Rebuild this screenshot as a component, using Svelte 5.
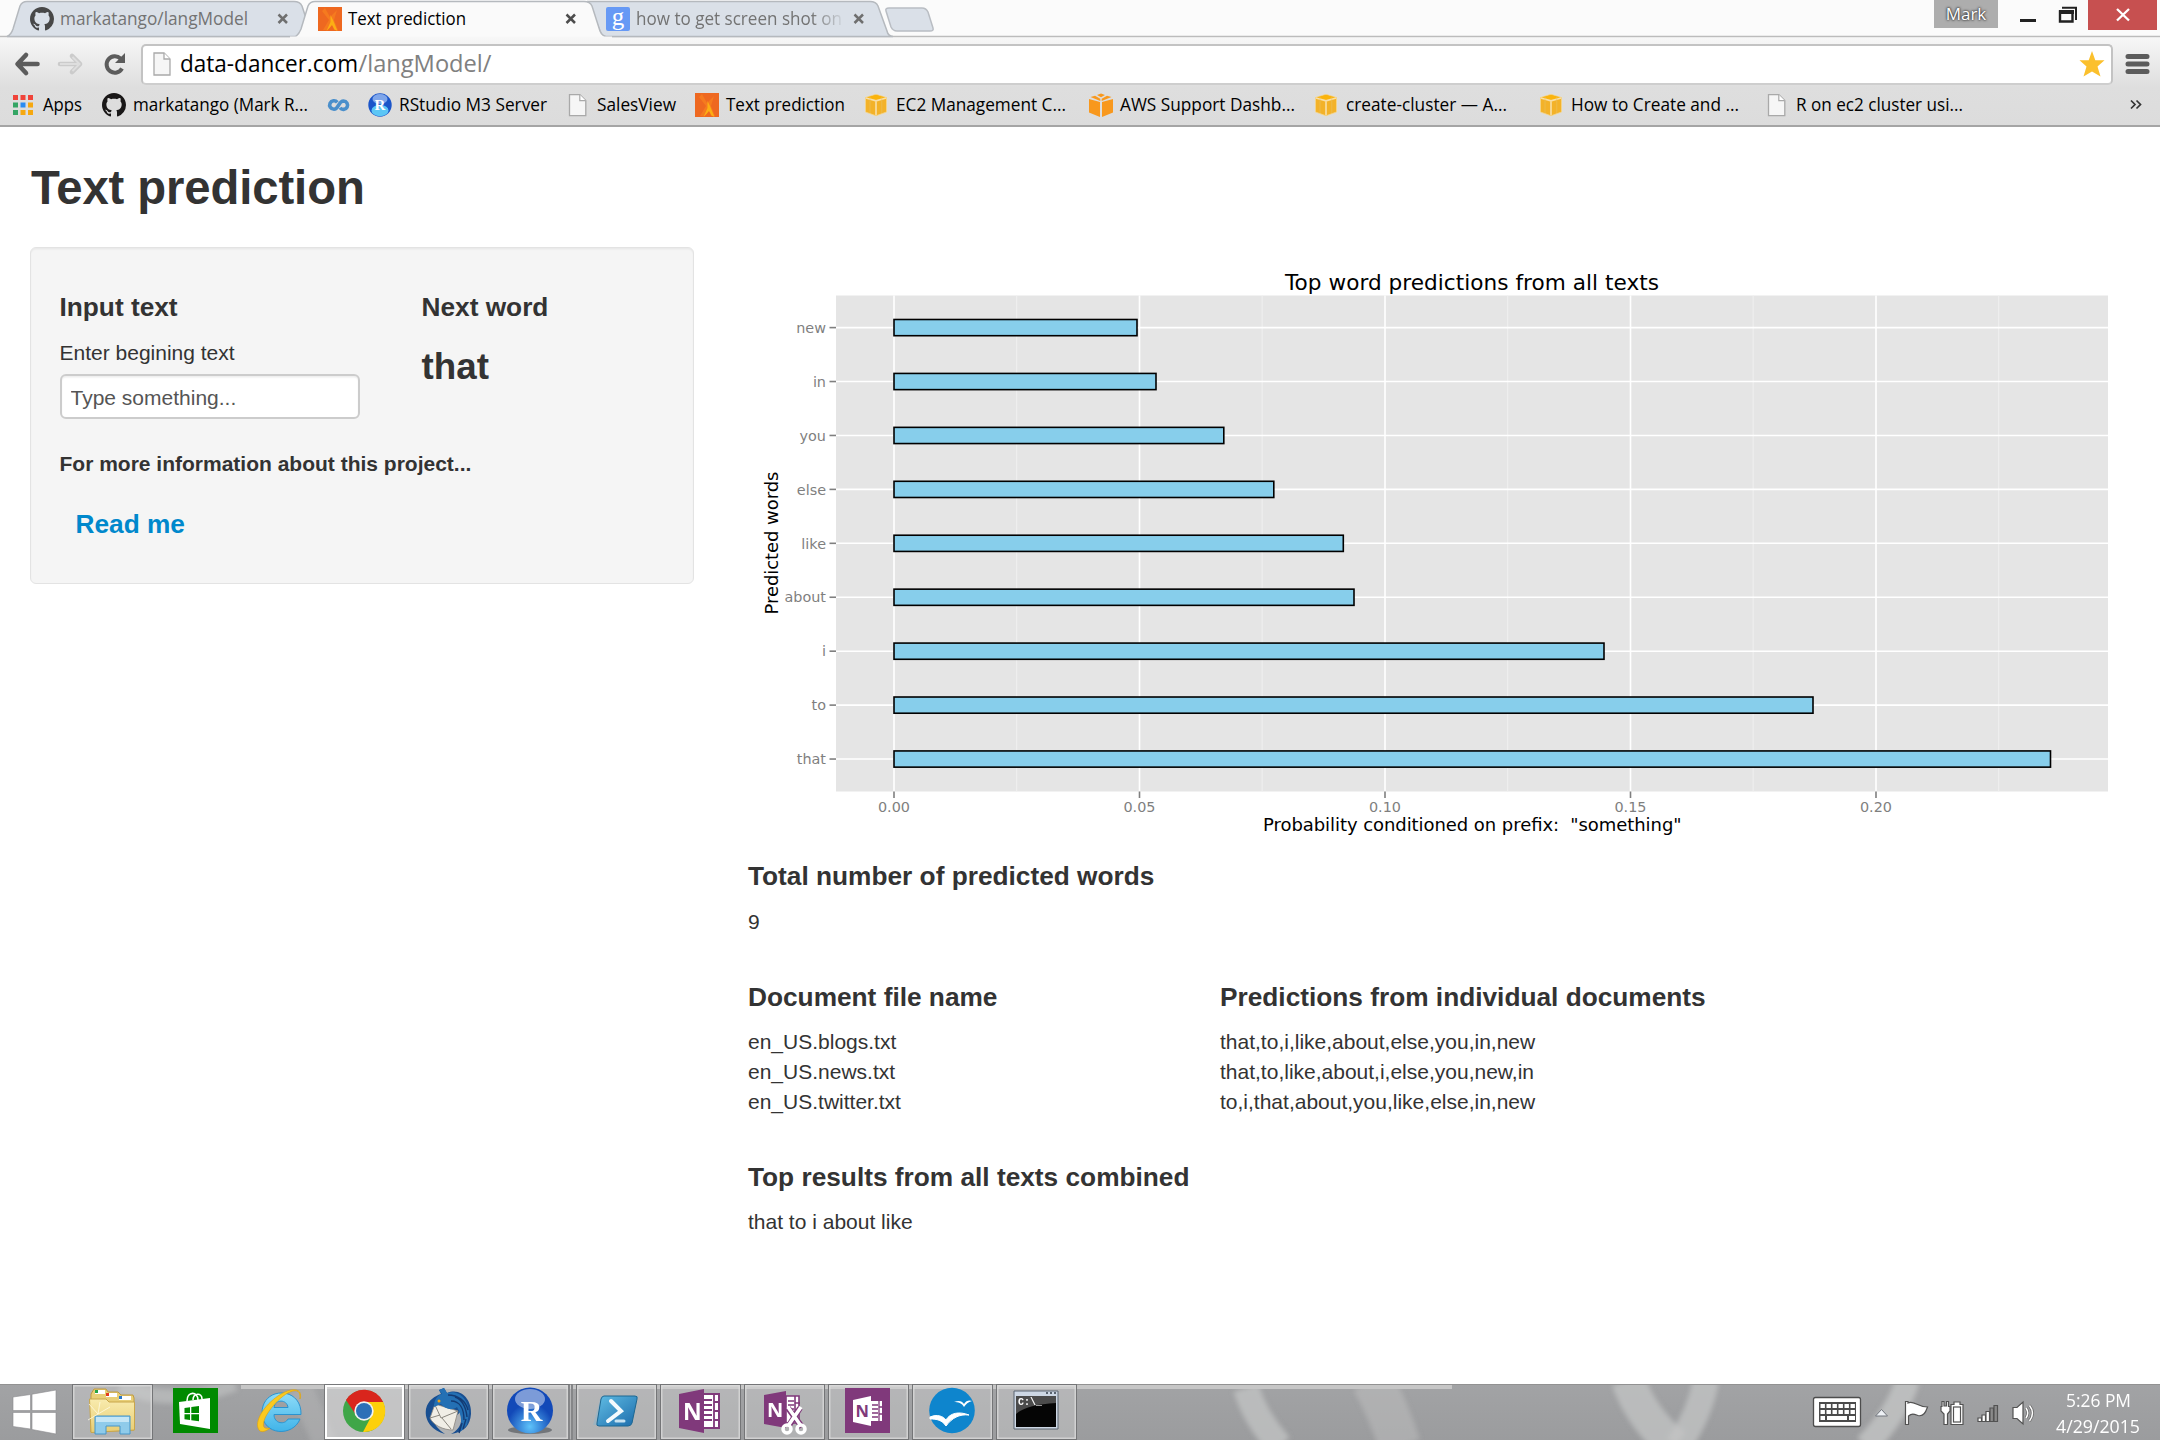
<script>
  const bookmarks = [
    { icon: 'apps', text: 'Apps', w: 39, span: 90 },
    { icon: 'github', text: 'markatango (Mark R...', w: 175, span: 225 },
    { icon: 'coursera', text: '', w: 0, span: 41 },
    { icon: 'rstudio', text: 'RStudio M3 Server', w: 148, span: 198 },
    { icon: 'page', text: 'SalesView', w: 79, span: 129 },
    { icon: 'flame', text: 'Text prediction', w: 119, span: 170 },
    { icon: 'cube', text: 'EC2 Management C...', w: 170, span: 224 },
    { icon: 'aws', text: 'AWS Support Dashb...', w: 175, span: 226 },
    { icon: 'cube', text: 'create-cluster — A...', w: 161, span: 225 },
    { icon: 'cube', text: 'How to Create and ...', w: 168, span: 225 },
    { icon: 'page', text: 'R on ec2 cluster usi...', w: 167, span: 220 }
  ];

  const bars = [
    { word: 'new', end: 1137 },
    { word: 'in', end: 1156 },
    { word: 'you', end: 1223.8 },
    { word: 'else', end: 1273.8 },
    { word: 'like', end: 1343.3 },
    { word: 'about', end: 1354 },
    { word: 'i', end: 1604 },
    { word: 'to', end: 1813 },
    { word: 'that', end: 2050.5 }
  ];
  const rowY = (i) => 327.6 + i * 53.93;
  const ticks = ['0.00', '0.05', '0.10', '0.15', '0.20'];
  const tickX = (i) => 894 + i * 245.5;

  const documents = ['en_US.blogs.txt', 'en_US.news.txt', 'en_US.twitter.txt'];
  const predictions = [
    'that,to,i,like,about,else,you,in,new',
    'that,to,like,about,i,else,you,new,in',
    'to,i,that,about,you,like,else,in,new'
  ];

  const tasks = [
    { icon: 'explorer', state: 'open' },
    { icon: 'store', state: '' },
    { icon: 'ie', state: '' },
    { icon: 'chrome', state: 'active' },
    { icon: 'thunderbird', state: 'open' },
    { icon: 'rstudio', state: 'open stacked' },
    { icon: 'powershell', state: 'open' },
    { icon: 'onenote', state: 'open' },
    { icon: 'clipper', state: 'open' },
    { icon: 'onenoteapp', state: 'open' },
    { icon: 'openoffice', state: 'open' },
    { icon: 'cmd', state: 'open' }
  ];
  let phrase = $state('');
</script>

{#snippet label(text, w, size = 18, cls = '')}
  <svg class="label {cls}" width={w + 2} height="28" viewBox="0 0 {w + 2} 28">
    <text x="0" y="20" font-size={size} textLength={w} lengthAdjust="spacingAndGlyphs">{text}</text>
  </svg>
{/snippet}

{#snippet github(color)}
  <svg class="fav" viewBox="0 0 16 16"><path fill={color} d="M8 0C3.58 0 0 3.58 0 8c0 3.54 2.29 6.53 5.47 7.59.4.07.55-.17.55-.38 0-.19-.01-.82-.01-1.49-2.01.37-2.53-.49-2.69-.94-.09-.23-.48-.94-.82-1.13-.28-.15-.68-.52-.01-.53.63-.01 1.08.58 1.23.82.72 1.21 1.87.87 2.33.66.07-.52.28-.87.51-1.07-1.78-.2-3.64-.89-3.64-3.95 0-.87.31-1.59.82-2.15-.08-.2-.36-1.02.08-2.12 0 0 .67-.21 2.2.82.64-.18 1.32-.27 2-.27.68 0 1.36.09 2 .27 1.53-1.04 2.2-.82 2.2-.82.44 1.1.16 1.92.08 2.12.51.56.82 1.27.82 2.15 0 3.07-1.87 3.75-3.65 3.95.29.25.54.73.54 1.48 0 1.07-.01 1.93-.01 2.2 0 .21.15.46.55.38A8.013 8.013 0 0016 8c0-4.42-3.58-8-8-8z" /></svg>
{/snippet}

{#snippet flame()}
  <svg class="fav" viewBox="0 0 24 24">
    <rect width="24" height="24" fill="#ee6820" />
    <path d="M7 1 12 10 19 3 16 13 20 23H16L14 17 9 23H5L11 13 4 4Z" fill="#f57a1f" />
    <path d="M12.500 8 15 13 19.500 24 16.500 22.500 14 18 11.500 21 8.500 24 12.500 15Z" fill="#fcae14" />
  </svg>
{/snippet}

{#snippet page()}
  <svg class="fav" viewBox="0 0 24 24">
    <path d="M3.700 1.200H14l6 6V22.300H3.700Z" transform="translate(-.2 .4)" fill="#f6f6f6" stroke="#a9a9a9" stroke-width="1.300" />
    <path d="M13.800 1.800V7.600H19.600" fill="#fff" stroke="#a9a9a9" stroke-width="1.200" />
  </svg>
{/snippet}

{#snippet close(color)}
  <svg class="x" width="12" height="12" viewBox="0 0 12 12"><path d="M1.500 1.500 10 10M10 1.500 1.500 10" stroke={color} stroke-width="2.500" /></svg>
{/snippet}

{#snippet bookmarkIcon(name)}
  {#if name === 'apps'}
    <svg class="fav" viewBox="0 0 24 24">
      <path d="M1 2h5v5H1zM8.500 2h5v5h-5zM16 2h5v5h-5z" fill="#f0443a" />
      <path d="M1 9.500h5v5H1zM1 17h5v5H1z" fill="#34a564" />
      <path d="M8.500 9.500h5v5h-5z" fill="#2a8bf2" />
      <path d="M16 9.500h5v5h-5zM8.500 17h5v5h-5zM16 17h5v5h-5z" fill="#f6a80f" />
    </svg>
  {:else if name === 'github'}
    {@render github('#191717')}
  {:else if name === 'coursera'}
    <svg class="fav" viewBox="0 0 24 24">
      <g fill="none" stroke="#4a8fcb" stroke-width="3.600">
        <path d="M10.300 9.300A4.300 4.300 0 1 0 7 16.300C11.500 16.300 11.500 8 16.500 8A4.200 4.200 0 1 1 13 14.700" />
      </g>
    </svg>
  {:else if name === 'rstudio'}
    <svg class="fav" viewBox="0 0 24 24">
      <circle cx="12" cy="12" r="11.700" fill="#1b55c9" />
      <ellipse cx="12" cy="17.500" rx="8.500" ry="5.700" fill="#5cc6f5" />
      <ellipse cx="12" cy="6" rx="7.500" ry="5" fill="#7fa6ea" />
      <text x="12" y="17" text-anchor="middle" class="serif" font-size="15" fill="#fff">R</text>
    </svg>
  {:else if name === 'page'}
    {@render page()}
  {:else if name === 'flame'}
    {@render flame()}
  {:else if name === 'cube'}
    <svg class="fav" viewBox="0 0 24 24">
      <path d="M.5 4.500V19L11 22.800 21.500 19V4.500L11 1.300Z" fill="#f3b229" stroke="#f5d68c" stroke-width=".8" />
      <path d="M1.500 4.500 11 2 20.500 4.500 11 7Z" fill="#fbb40c" />
      <path d="M1 5 11 7.800 21 5M11 7.800V22" stroke="#f8dfa8" stroke-width="1.600" fill="none" />
      <path d="M5 3.500V20M16.800 3.500V20" stroke="#e9c062" stroke-width=".6" />
    </svg>
  {:else}
    <svg class="fav" viewBox="0 0 24 24">
      <path d="M0 6 11 9V24L0 19.500ZM13 9 24 6V19.500L13 24ZM1.500 4 6 2.700 11.300 5.700V8ZM22.500 4 18 2.700 12.700 5.700V8ZM8 2 12 .5 16 2 12 4.300Z" fill="#f8981d" />
    </svg>
  {/if}
{/snippet}

{#snippet taskIcon(name)}
  <svg class="task-icon" viewBox="0 0 48 48">
    {#if name === 'explorer'}
      <path d="M3 7 6 2H18L20 5H30L33 8H45L46 11V43L3 45Z" fill="#e8cf78" stroke="#c09a3c" />
      <path d="M7 3h10v4H7zM18 6h11v4H18zM31 9h12v4H31z" fill="#fff" />
      <path d="M7 3h3v3H7z" fill="#28a445" /><path d="M18 6h3v3h-3z" fill="#e33b20" /><path d="M31 9h3v3h-3z" fill="#2777c9" />
      <path d="M1.500 12H18L21 15H46.500V43L3 45.500Z" fill="url(#folder)" stroke="#c9a64b" />
      <path d="M7 29H42V47H32V39H18V47H7Z" fill="#8fcbea" stroke="#4695c8" />
      <path d="M8 30H41V35H8Z" fill="#c5e6f6" />
      <path d="M10 27 1 17M10 27 12 15M10 27 22 20M10 27 0 33" stroke="#fffbe2" stroke-width=".8" />
    {:else if name === 'store'}
      <rect x="1" y="1" width="45" height="45" fill="#008a00" />
      <path d="M7 15 38 11V42L8 37Z" fill="#fff" />
      <path d="M15 14C15 4 26 4 26 13M21 13C21 6 30 5 30 12" fill="none" stroke="#fff" stroke-width="1.600" />
      <path d="M12.500 21 18 20.300V26H12.500ZM19.300 20.100 27 19V26H19.300ZM12.500 27.300H18V33L12.500 32.300ZM19.300 27.300H27V34.300L19.300 33.200Z" fill="#008a00" />
    {:else if name === 'ie'}
      <path d="M45 27.500H18C18 37 29 38 32 32H44C37 50 7 49 6 26 6 -1 46 -1 45 27.500ZM18 20.500H32C31 12 19 12 18 20.500Z" fill="url(#ieblue)" stroke="#2b93cf" />
      <path d="M44 12C47 3 39-1 25 7 10 16-1 32 2 41 4 48 12 43 14 41 9 42 6 41 8 34 11 23 31 1 41 4 44 5 44 9 44 12Z" fill="#fbc91f" stroke="#dda008" stroke-width=".6" />
    {:else if name === 'chrome'}
      <circle cx="24" cy="24" r="21" fill="#3fa648" />
      <path d="M24 24V15H43.200A21 21 0 0 1 23 45L32 28Z" fill="#fdd00b" />
      <path d="M6 13A21 21 0 0 1 43.200 15H24L16 28Z" fill="#d9251d" />
      <circle cx="24" cy="24" r="9.700" fill="#f2f2f2" />
      <circle cx="24" cy="24" r="8" fill="#2d70b7" />
    {:else if name === 'thunderbird'}
      <path d="M15 3 20 1 23 6C38 0 48 14 47 27 46 38 41 45 27 47 37 42 39 33 36 25 31 33 17 32 10 20 6 29 8 38 21 47 9 44 0 34 2 22 4 13 11 9 17 7Z" fill="#194f91" />
      <path d="M11 17 34 24 29 43C19 43 9 38 6 31Z" fill="#f1eee6" stroke="#8b877f" stroke-width=".8" />
      <path d="M11 18 17 31 34 24M6 31 16 28M18 31 27 42" stroke="#8b877f" fill="none" />
      <path d="M15 3 20 1 23 6C35 2 45 13 45 26L43 38 36 45C38 37 38 29 33 20 28 24 21 22 17 17L10 20C10 12 14 8 18 7Z" fill="#2470b4" />
      <path d="M27 14C36 14 40 22 40 33M31 10C39 13 42 20 43 30M24 8C34 8 42 14 44 23M38 36 35 46M42 32 39 42" stroke="#133b74" stroke-width="1.400" fill="none" />
      <circle cx="15" cy="14" r="1.500" fill="#f0a018" />
    {:else if name === 'rstudio'}
      <ellipse cx="24" cy="43" rx="22" ry="4" fill="#727579" />
      <circle cx="24" cy="23.500" r="23" fill="url(#ball)" />
      <ellipse cx="24" cy="12" rx="15" ry="10" fill="#fff" opacity=".45" />
      <text x="25.500" y="34" text-anchor="middle" class="serif" font-size="30" fill="#fff">R</text>
    {:else if name === 'powershell'}
      <path d="M9 9H46L40 38H1Z" fill="#7cb6da" opacity=".35" />
      <path d="M12 9H43Q46 9 45 12L40 36Q39 39 36 39H7Q4 39 5 36L9 12Q10 9 12 9Z" fill="url(#ps)" stroke="#1d6690" />
      <path d="M19 14 29 24 16 34" fill="none" stroke="#f4fafd" stroke-width="4" stroke-linecap="round" />
      <path d="M24 34H32" stroke="#c7e2f1" stroke-width="3" stroke-linecap="round" />
    {:else if name === 'onenote'}
      <path d="M26 7H43V41H26Z" fill="#fff" stroke="#80397b" stroke-width="2" />
      <path d="M28 13H36M28 18H36M28 23H36M28 28H36M28 33H36M38 7V41M38 15H44M38 24H44M38 33H44" stroke="#80397b" stroke-width="1.800" />
      <path d="M3 7 28 2V46L3 41Z" fill="#80397b" />
      <text x="7" y="32.500" font-size="23" font-weight="700" fill="#fff">N</text>
    {:else if name === 'clipper'}
      <path d="M26 9H39V36H26Z" fill="#fff" stroke="#80397b" stroke-width="1.600" />
      <path d="M28 14H34M28 18H34M28 22H34M35 9V35M35 16H40M35 23H40" stroke="#80397b" stroke-width="1.600" />
      <path d="M4 8 26 4V41L4 37Z" fill="#80397b" />
      <text x="7" y="30" font-size="20" font-weight="700" fill="#fff">N</text>
      <g fill="none" stroke="#80397b" stroke-width="6"><path d="M28 21 42 40M40 21 28 40" /></g>
      <g fill="none" stroke="#fff" stroke-width="3.500">
        <path d="M28 20 41 39M41 20 28 39" /><circle cx="27" cy="42" r="4" /><circle cx="41" cy="42" r="4" />
      </g>
    {:else if name === 'onenoteapp'}
      <rect x="1" y="1" width="45" height="45" fill="#80397b" />
      <path d="M26 14H38V34H26Z" fill="#fff" />
      <path d="M28 18H34M28 22H34M28 26H34M28 30H34M35 14V34M35 20H39M35 27H39" stroke="#80397b" stroke-width="1.300" />
      <path d="M9 13 27 9V39L9 35Z" fill="#fff" />
      <text x="11.500" y="30" font-size="16.500" font-weight="700" fill="#80397b">N</text>
    {:else if name === 'openoffice'}
      <circle cx="24" cy="23.500" r="22.800" fill="#0e85cd" />
      <path d="M26 15C31 13 34 14 36 17 38 13 42 13 44 14 40 15 38 17 36 20 34 16 30 15 26 15Z" fill="#fff" />
      <path d="M2 30C9 27 15 29 18 33 22 26 31 24 41 28 31 27 24 31 18 39 14 33 9 32 2 32Z" fill="#fff" stroke="#fff" />
    {:else}
      <path d="M2 4H46V42H2Z" fill="#cdd7e4" stroke="#5a6470" />
      <path d="M4 9H44V40H4Z" fill="#050505" />
      <path d="M4 9H44V16C26 17 12 20 4 27Z" fill="#4b4b4b" />
      <text x="6" y="18" class="mono" font-size="10" font-weight="700" fill="#fff">C:\_</text>
      <path d="M34 6h2M38 6h2M42 6h2" stroke="#59636f" stroke-width="2" />
    {/if}
  </svg>
{/snippet}

<div class="screen">
  <header class="browser">
    <svg class="tab-shapes" width="2160" height="38" viewBox="0 0 2160 38">
      <rect width="2160" height="38" fill="#fbfbfb" />
      <path d="M0 36.500H2160" stroke="#bcbcbc" stroke-width="1.600" />
      <path d="M7 36.500C11 35 12 32 13 29L20 6Q22 1.500 27 1.500H294Q300 1.500 302 6L312 36.500Z" fill="#dae0e8" stroke="#b5b9be" stroke-width="1.500" />
      <path d="M588 1.500H870Q876 1.500 878 6L887 31Q888 36 893 36.500H605Q602 36 600 31Z" fill="#dae0e8" stroke="#b5b9be" stroke-width="1.500" />
      <path d="M294 38C298 35 300 32 301 29L308 6Q310 1.500 315 1.500H584Q590 1.500 592 6L600 31Q602 36 607 37V38Z" fill="#fafafa" stroke="#b5b9be" stroke-width="1.500" />
      <path d="M290 38H612" stroke="#f7f7f7" stroke-width="3" />
      <path d="M889 8H922Q926 8 928 12L933 28Q934 31 930 31H897Q893 31 891 27L886 11Q885 8 889 8Z" fill="#dae0e8" stroke="#b9bdc3" stroke-width="1.500" />
    </svg>
    <div class="tabs">
      <div class="tab first">{@render github('#484848')}{@render label('markatango/langModel', 188, 18, 'dim')}{@render close('#6f6f6f')}</div>
      <div class="tab second">{@render flame()}{@render label('Text prediction', 118)}{@render close('#4d4d4d')}</div>
      <div class="tab third">
        <svg class="fav" viewBox="0 0 24 24">
          <rect width="24" height="24" rx="2" fill="#6699f5" />
          <text x="12" y="17.500" text-anchor="middle" class="gee" font-size="25" fill="#fff">g</text>
        </svg>
        <div class="fade">{@render label('how to get screen shot on', 206, 18, 'dim')}</div>
        {@render close('#6f6f6f')}
      </div>
      <div class="window">
        <div class="user">Mark</div>
        <svg width="58" height="30" viewBox="0 0 58 30">
          <path d="M1 20.500H17" stroke="#222" stroke-width="3" />
          <path d="M41 11.500H53.500V21.500H41Z" fill="none" stroke="#222" stroke-width="2.400" />
          <path d="M40 12H55" stroke="#222" stroke-width="4" />
          <path d="M43 7.800H57V20" fill="none" stroke="#222" stroke-width="2" />
        </svg>
        <div class="quit"><svg width="14" height="14" viewBox="0 0 14 14"><path d="M1 1 13 12.500M13 1 1 12.500" stroke="#fff" stroke-width="2.300" /></svg></div>
      </div>
    </div>

    <div class="toolbar">
      <svg class="nav" width="124" height="30" viewBox="0 0 124 30">
        <path d="M14 6 5.500 15 14 24M7 15H25.500" fill="none" stroke="#5c5c5c" stroke-width="4.600" stroke-linecap="round" stroke-linejoin="round" />
        <path d="M60 7 68 15 60 23M48 15H67" fill="none" stroke="#cbcbcb" stroke-width="4.600" stroke-linecap="round" stroke-linejoin="round" />
        <path d="M60.500 8 67.500 15 60.500 22M48 15H66" fill="none" stroke="#dedede" stroke-width="2" />
        <path d="M110 19.500A8.200 8.200 0 1 1 108.500 9.500" fill="none" stroke="#5c5c5c" stroke-width="4" />
        <path d="M113 4V14H103Z" fill="#5c5c5c" />
      </svg>
      <div class="omnibox">
        <svg class="doc" width="18" height="24" viewBox="0 0 18 24">
          <path d="M1 1H11L17 7V23H1Z" fill="#f6f6f6" stroke="#a9a9a9" stroke-width="1.300" />
          <path d="M11 1V7H17" fill="#fff" stroke="#a9a9a9" stroke-width="1.300" />
        </svg>
        <svg class="url" width="320" height="36" viewBox="0 0 320 36">
          <text x="0" y="26" font-size="23" textLength="178" lengthAdjust="spacingAndGlyphs">data-dancer.com</text>
          <text x="178.500" y="26" font-size="23" fill="#808080" textLength="133" lengthAdjust="spacingAndGlyphs">/langModel/</text>
        </svg>
        <svg class="star" width="26" height="26" viewBox="0 0 26 26"><path d="M13 0 16.300 9.300H25.500L18.500 15.500 21.500 25.500 13 20.500 4.500 25.500 7.500 15.500.5 9.300H9.700Z" fill="#fbc02d" /></svg>
      </div>
      <svg width="25" height="22" viewBox="0 0 25 22"><path d="M3 3.500H22M3 11H22M3 18.500H22" stroke="#5c5c5c" stroke-width="5" stroke-linecap="round" /></svg>
    </div>

    <nav class="bookmarks">
      {#each bookmarks as b}
        <div class="bookmark" style:width="{b.span}px">
          {@render bookmarkIcon(b.icon)}
          {#if b.text}{@render label(b.text, b.w)}{/if}
        </div>
      {/each}
      <svg class="more" width="12" height="12" viewBox="0 0 12 12"><path d="M1 1.500 5 5.500 1 9.500M6.500 1.500 10.500 5.500 6.500 9.500" fill="none" stroke="#333" stroke-width="1.700" /></svg>
    </nav>
  </header>

  <main>
    <h2>Text prediction</h2>
    <div class="columns">
      <aside class="well">
        <div class="inputs">
          <div class="field">
            <h4>Input text</h4>
            <label for="phrase">Enter begining text</label>
            <input id="phrase" type="text" placeholder="Type something..." bind:value={phrase} />
          </div>
          <div class="next">
            <h4>Next word</h4>
            <h3>that</h3>
          </div>
        </div>
        <h5>For more information about this project...</h5>
        <h4 class="readme"><a href="#readme">Read me</a></h4>
      </aside>

      <section class="results">
        <svg class="chart" width="1382" height="600" viewBox="748 247 1382 600">
          <rect x="836" y="295.500" width="1272" height="496" fill="#e5e5e5" />
          {#each ticks as t, i}
            {#if tickX(i) + 123 < 2108}
              <path d="M{tickX(i) + 122.7} 295.500V791.500" stroke="#f0f0f0" stroke-width="1" />
            {/if}
          {/each}
          {#each bars as b, i}
            <path d="M836 {rowY(i)}H2108" stroke="#fff" stroke-width="1.600" />
            <path d="M829.500 {rowY(i)}H836" stroke="#7f7f7f" stroke-width="1.600" />
            <text class="tick" x="826" y={rowY(i) + 5.200} text-anchor="end">{b.word}</text>
          {/each}
          {#each ticks as t, i}
            <path d="M{tickX(i)} 295.500V791.500" stroke="#fff" stroke-width="1.600" />
            <path d="M{tickX(i)} 791.500V798" stroke="#7f7f7f" stroke-width="1.600" />
            <text class="tick" x={tickX(i)} y="811.500" text-anchor="middle">{t}</text>
          {/each}
          {#each bars as b, i}
            <rect x="894" y={rowY(i) - 8.100} width={b.end - 894} height="16.200" fill="#87ceeb" stroke="#000" stroke-width="1.600" />
          {/each}
          <text x="1472" y="290" text-anchor="middle" font-size="21.600" textLength="374">Top word predictions from all texts</text>
          <text x="1472.300" y="830.500" text-anchor="middle" font-size="18" textLength="418.500" xml:space="preserve">Probability conditioned on prefix:  "something"</text>
          <text transform="translate(778 543) rotate(-90)" text-anchor="middle" font-size="18" textLength="143">Predicted words</text>
        </svg>

        <h4>Total number of predicted words</h4>
        <p>9</p>
        <div class="tables">
          <div>
            <h4>Document file name</h4>
            {#each documents as d}<p>{d}</p>{/each}
          </div>
          <div>
            <h4>Predictions from individual documents</h4>
            {#each predictions as p}<p>{p}</p>{/each}
          </div>
        </div>
        <h4>Top results from all texts combined</h4>
        <p>that to i about like</p>
      </section>
    </div>
  </main>

  <footer class="taskbar">
    <svg class="wallpaper" width="2160" height="56" viewBox="0 0 2160 56">
      <defs>
        <linearGradient id="bg" x2="0" y2="1"><stop stop-color="#a2a3a5" /><stop offset="1" stop-color="#9b9c9e" /></linearGradient>
        <linearGradient id="folder" x2="0" y2="1"><stop stop-color="#f8ebae" /><stop offset="1" stop-color="#e9cd72" /></linearGradient>
        <linearGradient id="ieblue" x2="0" y2="1"><stop stop-color="#8fdcf8" /><stop offset="1" stop-color="#40b4e9" /></linearGradient>
        <linearGradient id="ps" x2="1" y2="1"><stop stop-color="#61bde4" /><stop offset="1" stop-color="#1b6bab" /></linearGradient>
        <radialGradient id="ball" cy=".85"><stop stop-color="#5ec3fa" /><stop offset="1" stop-color="#1249b8" /></radialGradient>
        <filter id="soft"><feGaussianBlur stdDeviation="2.500" /></filter>
      </defs>
      <rect width="2160" height="56" fill="url(#bg)" />
      <g filter="url(#soft)" fill="none" stroke="#c3c4c4">
        <path d="M1246 4Q1255 34 1280 62" stroke-width="26" opacity=".75" />
        <path d="M1372-4Q1388 25 1400 62" stroke-width="42" opacity=".45" />
        <path d="M1628-4Q1642 35 1675 62" stroke-width="34" opacity=".75" />
        <path d="M1706-4Q1700 30 1678 62" stroke-width="26" opacity=".75" />
        <path d="M1908-4Q1898 28 1866 62" stroke-width="24" opacity=".8" />
        <path d="M120 2Q175 24 235 0" stroke-width="14" opacity=".6" />
        <path d="M300 4Q312 28 324 58" stroke-width="24" opacity=".3" />
      </g>
      <path d="M241 2.500H1452" stroke="#c6c6c6" stroke-width="5" />
      <path d="M0 .5H2160" stroke="#929292" stroke-width="1.200" />
    </svg>
    <div class="start">
      <svg width="46" height="46" viewBox="0 0 46 46"><path d="M1 8 18.500 5.500V21.500H1ZM20 5.200 44 1V21.500H20ZM1 23.500H18.500V40L1 37.500ZM20 23.500H44V45L20 40.500Z" fill="#fff" stroke="#8b8c8e" stroke-width=".6" /></svg>
    </div>
    <div class="tasks">
      {#each tasks as t}
        <div class="task {t.state}">{@render taskIcon(t.icon)}</div>
      {/each}
    </div>
    <div class="tray">
      <svg width="226" height="36" viewBox="1812 1394 226 36">
        <rect x="1813.500" y="1397.500" width="47" height="29" rx="2" fill="#fff" stroke="#4d4d4d" stroke-width="1.300" />
        <path d="M1819 1402H1856V1422H1819Z" fill="#4b4b4b" />
        <path d="M1820.500 1406H1855M1820.500 1412H1855" stroke="#fff" stroke-width="4.200" stroke-dasharray="4.400 1.600" />
        <path d="M1820.500 1418H1825M1827 1418H1847M1849 1418H1855" stroke="#fff" stroke-width="4" />
        <path d="M1875.500 1416 1881.500 1409.500 1887.500 1416Z" fill="#eef1f5" stroke="#70757c" />
        <g fill="#fff" stroke="#525252" stroke-width="1.200">
          <path d="M1905.500 1401.500H1908V1403C1914 1400 1917 1407 1927.500 1407C1926 1411 1924 1417 1918 1415.500 1914 1414 1912 1413 1908.500 1416V1424.500H1905.500Z" />
          <path d="M1942 1401.500H1944V1406H1946.500V1401.500H1948.500V1406.500H1950V1411L1947.500 1414V1424.500H1944V1414L1941 1411V1406.500H1942Z" />
          <path d="M1951 1404.500H1954V1402H1960V1404.500H1963V1424.500H1951Z" />
          <rect x="1953.500" y="1407" width="7" height="15" />
          <path d="M1978 1418H1981.500V1421.500H1978ZM1982 1415H1985.500V1421.500H1982ZM1986 1411.500H1989.500V1421.500H1986Z" />
          <path d="M1990 1408H1993.500V1421.500H1990ZM1994 1405.500H1997.500V1421.500H1994Z" fill="#8a8a8a" />
          <path d="M2013 1407.500H2017L2023 1402V1424L2017 1418.500H2013Z" />
        </g>
        <path d="M2026 1408Q2029.500 1413 2026 1418M2029.500 1405.500Q2035.500 1413 2029.500 1421" fill="none" stroke="#666" stroke-width="3" />
        <path d="M2026 1408Q2029.500 1413 2026 1418M2029.500 1405.500Q2035.500 1413 2029.500 1421" fill="none" stroke="#fff" stroke-width="1.500" />
      </svg>
      <div class="clock">
        {@render label('5:26 PM', 65, 18, 'light')}
        {@render label('4/29/2015', 84, 18, 'light')}
      </div>
    </div>
  </footer>
</div>

<style>
  :global(body) { background: #fff; }
  .screen { width: 2160px; height: 1440px; display: flex; flex-direction: column; overflow: hidden; background: #fff; font-family: "Liberation Sans", Arial, sans-serif; font-size: 21px; line-height: 30px; color: #333; }
  svg { display: block; flex: none; overflow: visible; }
  svg text { font-family: "Open Sans", "Noto Sans", sans-serif; }
  svg text.serif { font-family: "Liberation Serif", serif; font-weight: 700; }
  svg text.gee { font-family: "Liberation Serif", serif; }
  svg text.mono { font-family: "Liberation Mono", monospace; }
  .fav { width: 24px; height: 24px; }
  .label { fill: #000; }
  .label.dim { fill: #737373; }
  .label.light { fill: #fff; }

  .browser { position: relative; flex: none; height: 125px; border-bottom: 2px solid #a5a5a5; background: linear-gradient(#f7f7f7 37px, #dedede 88px, #dcdcdc); font-family: "Open Sans", sans-serif; }
  .tab-shapes { position: absolute; left: 0; top: 0; overflow: hidden; }
  .tabs { position: relative; display: flex; height: 38px; }
  .tab { display: flex; align-items: center; height: 38px; box-sizing: border-box; flex: none; }
  .tab .label { margin-left: 6px; }
  .tab .x { margin-left: auto; }
  .tab.first { width: 259px; margin-left: 30px; }
  .tab.second { width: 259px; margin-left: 29px; }
  .tab.third { width: 259px; margin-left: 29px; }
  .fade { width: 216px; mask-image: linear-gradient(90deg, #000 84%, transparent); }
  .window { display: flex; margin-left: auto; width: 226px; }
  .user { width: 64px; height: 28px; margin-right: 21px; background: #adadad; color: #fff; font-size: 17px; line-height: 27px; text-align: center; text-shadow: 0 0 2px #222, 0 0 3px #333; }
  .quit { width: 69px; height: 30px; margin-left: 11px; background: #c75050; display: flex; align-items: center; justify-content: center; }

  .toolbar { display: flex; align-items: center; height: 46px; margin-top: 3px; }
  .nav { margin: 0 5px 0 12px; }
  .omnibox { width: 1972px; height: 41px; margin-right: 12px; box-sizing: border-box; border: 2px solid #c3c3c3; border-bottom-color: #cecece; border-radius: 5px; background: #fff; display: flex; align-items: center; }
  .doc { margin: 0 9px 0 10px; }
  .star { margin: 0 6px 0 auto; }
  .bookmarks { display: flex; align-items: center; height: 36px; padding-left: 12px; }
  .bookmark { display: flex; align-items: center; gap: 6.500px; flex: none; }
  .more { margin-left: auto; margin-right: 18px; }

  main { flex: 1; padding: 31px 30px 0; }
  h2, h3, h4, h5, p { margin: 0; font-weight: 700; }
  h2 { font-size: 47.250px; line-height: 60px; margin-bottom: 29px; padding-left: 1px; letter-spacing: -.1px; }
  h3 { font-size: 36.750px; line-height: 60px; margin: 15px 0; }
  h4 { font-size: 26.250px; line-height: 30px; margin: 15px 0; }
  h5 { font-size: 21px; line-height: 30px; margin: 15px 0; }
  p { font-weight: 400; }
  .columns { display: flex; gap: 54px; align-items: flex-start; }
  .well { box-sizing: border-box; width: 664px; height: 337px; flex: none; padding: 28.500px; border: 1.500px solid #e3e3e3; border-radius: 6px; background: #f5f5f5; box-shadow: inset 0 1.500px 1.500px rgba(0, 0, 0, .05); display: flex; flex-direction: column; }
  .inputs { display: flex; height: 157.500px; }
  .field { width: 362px; display: flex; flex-direction: column; align-items: flex-start; }
  label { margin: 1px 0 6.500px; }
  input { box-sizing: border-box; width: 300px; height: 45px; padding: 7px 9px 5px; border: 2px solid #ccc; border-radius: 6px; box-shadow: inset 0 1.500px 1.500px rgba(0, 0, 0, .075); font: 21px/30px "Liberation Sans", Arial, sans-serif; color: #555; }
  input::placeholder { color: #555; opacity: 1; }
  .readme { margin: 15px 0 0 16px; }
  a { color: #08c; text-decoration: none; }
  .results { flex: 1; display: flex; flex-direction: column; }
  .results > h4:first-of-type { margin-top: 14px; }
  .results > p:first-of-type { margin-top: 1px; }
  .chart text { font-family: "DejaVu Sans", sans-serif; white-space: pre; }
  .chart .tick { font-size: 14.400px; fill: #7f7f7f; }
  .tables { display: grid; grid-template-columns: 472px 1fr; margin: 29.500px 0 30px; }
  .tables h4 { margin-top: 15px; }

  .taskbar { position: relative; flex: none; height: 56px; display: flex; }
  .wallpaper { position: absolute; left: 0; top: 0; overflow: hidden; }
  .start { position: relative; width: 71.500px; display: flex; align-items: center; padding: 0 0 0 12px; box-sizing: border-box; }
  .tasks { position: relative; display: flex; gap: 3px; }
  .task { width: 81px; height: 56px; box-sizing: border-box; border: 1px solid transparent; display: flex; align-items: center; justify-content: center; }
  .task.open { background: rgba(215, 215, 215, .36); border-color: #747577; box-shadow: inset 0 0 0 1.500px rgba(220, 220, 220, .75); }
  .task.active { background: rgba(225, 225, 225, .55); border-color: #77787a; box-shadow: inset 0 0 0 2px #fff; }
  .task.stacked { border-right: 5px double #858688; }
  .task-icon { width: 48px; height: 48px; margin: -2px 1px 0 0; }
  .tray { position: relative; margin-left: auto; width: 348px; display: flex; }
  .tray > svg { margin-top: 10px; }
  .clock { width: 122px; display: flex; flex-direction: column; align-items: center; padding-top: 3px; box-sizing: border-box; }
  .clock .label { margin-bottom: -2px; }
</style>
